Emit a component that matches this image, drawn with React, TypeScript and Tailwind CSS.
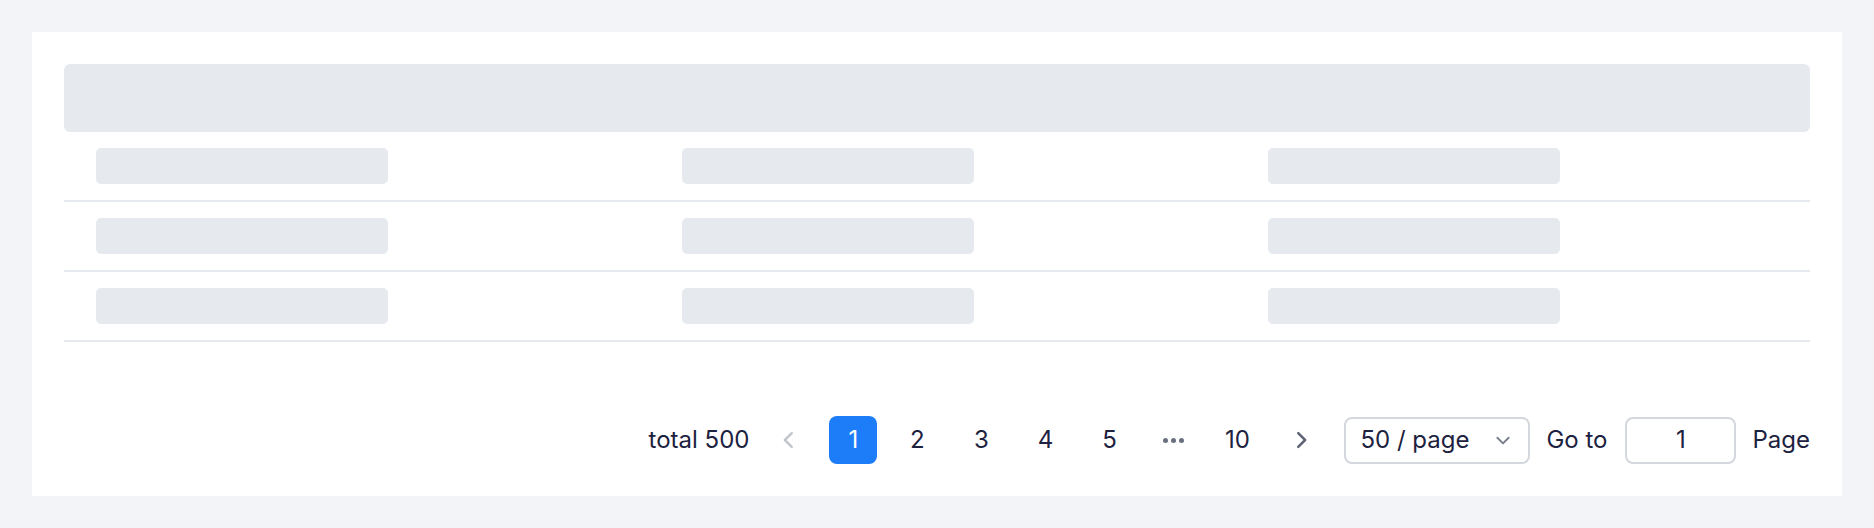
import React from "react";

const rows = [0, 1, 2];
const cols = [0, 1, 2];

function Chevron({ dir, className }: { dir: "left" | "right" | "down"; className?: string }) {
  const d =
    dir === "left" ? "M10 3 L5 8 L10 13" : dir === "right" ? "M6 3 L11 8 L6 13" : "M3 6 L8 11 L13 6";
  return (
    <svg viewBox="0 0 16 16" className={className} fill="none" stroke="currentColor" strokeWidth={1.8} strokeLinecap="round" strokeLinejoin="round">
      <path d={d} />
    </svg>
  );
}

function PageItem({ children, active }: { children: React.ReactNode; active?: boolean }) {
  return (
    <div
      className={
        "flex h-12 w-12 items-center justify-center rounded-lg " +
        (active ? "bg-[#1d7df9] text-white" : "text-[#1d2240]")
      }
    >
      {children}
    </div>
  );
}

export default function App() {
  return (
    <div className="min-h-[528px] bg-[#f3f4f8] p-8" style={{ fontFamily: "Inter, 'Noto Sans', sans-serif" }}>
      <div className="flex flex-col bg-white p-8">
        {/* header skeleton */}
        <div className="h-[68px] rounded-md bg-[#e6e9ee]" />

        {/* rows */}
        {rows.map((r) => (
          <div key={r} className="border-b-2 border-[#e6e9ee]">
            <div className="grid grid-cols-[586px_586px_1fr] py-4">
              {cols.map((c) => (
                <div key={c} className="px-8">
                  <div className="h-9 w-[292px] rounded-[5px] bg-[#e6e9ee]" />
                </div>
              ))}
            </div>
          </div>
        ))}

        {/* pagination */}
        <div className="mt-[74px] flex items-center justify-end text-[24px] text-[#1d2240]">
          <span className="mr-4">total 500</span>
          <div className="flex items-center gap-4">
            <PageItem>
              <Chevron dir="left" className="h-[22px] w-[22px] text-[#c2c6ce]" />
            </PageItem>
            <PageItem active>1</PageItem>
            <PageItem>2</PageItem>
            <PageItem>3</PageItem>
            <PageItem>4</PageItem>
            <PageItem>5</PageItem>
            <PageItem>
              <span className="flex gap-[3px]">
                <span className="h-[5px] w-[5px] rounded-full bg-[#6b7080]" />
                <span className="h-[5px] w-[5px] rounded-full bg-[#6b7080]" />
                <span className="h-[5px] w-[5px] rounded-full bg-[#6b7080]" />
              </span>
            </PageItem>
            <PageItem>10</PageItem>
            <PageItem>
              <Chevron dir="right" className="h-[22px] w-[22px] text-[#5f6475]" />
            </PageItem>
          </div>
          <div className="ml-[19px] flex h-[47px] w-[186px] items-center justify-between rounded-lg border-2 border-[#d4d7de] pl-[14px] pr-4">
            <span>50 / page</span>
            <Chevron dir="down" className="h-[18px] w-[18px] text-[#7c8190]" />
          </div>
          <span className="ml-4">Go to</span>
          <div className="ml-[18px] flex h-[47px] w-[111px] items-center justify-center rounded-lg border-2 border-[#d4d7de]">
            1
          </div>
          <span className="ml-4">Page</span>
        </div>
      </div>
    </div>
  );
}
